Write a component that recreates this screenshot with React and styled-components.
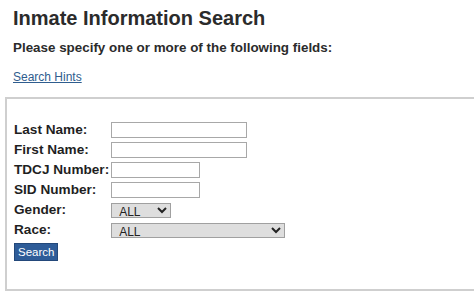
import styled, { createGlobalStyle } from "styled-components";

const GlobalStyle = createGlobalStyle`
  html, body {
    margin: 0;
    padding: 0;
    background: #ffffff;
    overflow: hidden;
  }
  body {
    font-family: "Liberation Sans", Arial, sans-serif;
    color: #222;
  }
`;

const Page = styled.div`
  width: 474px;
  height: 296px;
  overflow: hidden;
  padding-top: 6px;
  box-sizing: border-box;
`;

const Title = styled.h1`
  margin: 0 0 0 13px;
  font-size: 20px;
  font-weight: bold;
  line-height: 24px;
  color: #2b2b2b;
`;

const Subtitle = styled.h2`
  margin: 10px 0 0 13px;
  font-size: 13.4px;
  font-weight: bold;
  line-height: 16px;
  color: #2b2b2b;
`;

const HintLink = styled.a`
  display: inline-block;
  margin: 14px 0 0 13px;
  font-size: 12px;
  line-height: 14px;
  color: #2f5d8e;
  text-decoration: underline;
`;

const FormBox = styled.form`
  margin: 12px 0 0 5px;
  width: 520px;
  height: 194px;
  box-sizing: border-box;
  border: 2px solid #cfcfcf;
  padding: 23px 7px 0 7px;
`;

const Fields = styled.div`
  display: grid;
  grid-template-columns: max-content max-content;
  column-gap: 2px;
  row-gap: 4px;
  align-items: center;
`;

const Label = styled.label`
  font-size: 13.6px;
  font-weight: bold;
  color: #1f1f1f;
  line-height: 16px;
`;

const TextInput = styled.input`
  width: ${(p) => p.$w}px;
  height: 16px;
  box-sizing: border-box;
  border: 1px solid #a8a8a8;
  background: #fff;
  padding: 0 2px;
  margin: 0;
`;

const Select = styled.select`
  width: ${(p) => p.$w}px;
  height: 15px;
  box-sizing: border-box;
  border: 1px solid #a0a0a0;
  background: #dedede;
  font-family: "Liberation Sans", Arial, sans-serif;
  font-size: 12px;
  color: #222;
  padding: 0 0 0 3px;
  margin: 0;
  border-radius: 0;
`;

const SearchButton = styled.button`
  margin-top: 5px;
  height: 18px;
  padding: 0 3px;
  border: 1px solid #23487a;
  background: #2e5c98;
  color: #fff;
  font-family: "Liberation Sans", Arial, sans-serif;
  font-size: 11.5px;
  line-height: 16px;
  border-radius: 0;
`;

export default function App() {
  return (
    <Page>
      <GlobalStyle />
      <Title>Inmate Information Search</Title>
      <Subtitle>Please specify one or more of the following fields:</Subtitle>
      <HintLink href="#">Search Hints</HintLink>
      <FormBox onSubmit={(e) => e.preventDefault()}>
        <Fields>
          <Label>Last Name:</Label>
          <TextInput $w={136} />
          <Label>First Name:</Label>
          <TextInput $w={136} />
          <Label>TDCJ Number:</Label>
          <TextInput $w={89} />
          <Label>SID Number:</Label>
          <TextInput $w={89} />
          <Label>Gender:</Label>
          <Select $w={60} defaultValue="ALL">
            <option>ALL</option>
            <option>Male</option>
            <option>Female</option>
          </Select>
          <Label>Race:</Label>
          <Select $w={174} defaultValue="ALL">
            <option>ALL</option>
            <option>Asian</option>
            <option>Black</option>
            <option>Hispanic</option>
            <option>White</option>
            <option>Other</option>
          </Select>
        </Fields>
        <SearchButton type="submit">Search</SearchButton>
      </FormBox>
    </Page>
  );
}
